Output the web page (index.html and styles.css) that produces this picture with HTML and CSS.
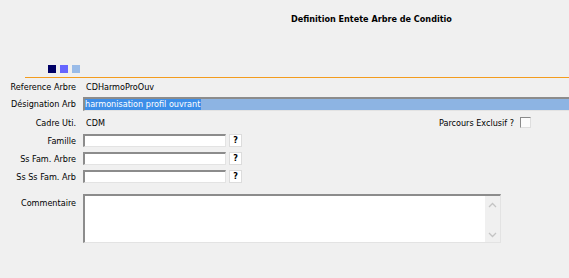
FILE: index.html
```html
<!DOCTYPE html>
<html>
<head>
    <meta charset="UTF-8">
    <title>Definition Entete Arbre de Conditio</title>
    <link rel="stylesheet" href="styles.css">
</head>
<body>
    <div class="header">
        <h1 class="title">Definition Entete Arbre de Conditio</h1>
    </div>

    <div class="swatches">
        <span class="sw sw-dark"></span>
        <span class="sw sw-mid"></span>
        <span class="sw sw-light"></span>
    </div>
    <div class="rule"></div>

    <div class="form">
        <div class="row row-ref">
            <span class="label">Reference Arbre</span>
            <span class="value">CDHarmoProOuv</span>
        </div>
        <div class="row row-desig">
            <span class="label">Désignation Arb</span>
            <div class="field field-wide field-selected"><span class="sel">harmonisation profil ouvrant</span></div>
        </div>
        <div class="row row-cadre">
            <span class="label">Cadre Uti.</span>
            <span class="value">CDM</span>
            <span class="check-label">Parcours Exclusif ?</span>
            <span class="check"></span>
        </div>
        <div class="row row-lookup">
            <span class="label">Famille</span>
            <div class="field field-short"></div>
            <span class="help">?</span>
        </div>
        <div class="row row-lookup">
            <span class="label">Ss Fam. Arbre</span>
            <div class="field field-short"></div>
            <span class="help">?</span>
        </div>
        <div class="row row-lookup">
            <span class="label">Ss Ss Fam. Arb</span>
            <div class="field field-short"></div>
            <span class="help">?</span>
        </div>
        <div class="row row-comment">
            <span class="label">Commentaire</span>
            <div class="field memo">
                <div class="scroll">
                    <svg width="9" height="6" viewBox="0 0 9 6"><path d="M1 5 L4.5 1.5 L8 5" fill="none" stroke="#c4c4c4" stroke-width="1.3"/></svg>
                    <svg width="9" height="6" viewBox="0 0 9 6"><path d="M1 1 L4.5 4.5 L8 1" fill="none" stroke="#c4c4c4" stroke-width="1.3"/></svg>
                </div>
            </div>
        </div>
    </div>
</body>
</html>
```

FILE: styles.css
```css
body { margin: 0; background: #f0f0f0; font-family: "DejaVu Sans Condensed", "Liberation Sans", Arial, sans-serif; font-size: 9px; color: #000; overflow: hidden; }
.header { height: 65px; }
.title { margin: 0; padding: 12px 0 0 291px; font-size: 9px; line-height: 14px; font-weight: bold; }
.swatches { display: flex; gap: 4px; padding-left: 48px; height: 8px; }
.sw { width: 8px; height: 8px; }
.sw-dark { background: #000066; }
.sw-mid { background: #6666ff; }
.sw-light { background: #99bbe8; }
.rule { margin: 4px 0 0 25px; height: 1px; background: #f39c1e; }
.row { display: flex; align-items: center; height: 13px; margin-top: 5px; }
.label { width: 76px; margin-right: 7px; text-align: right; white-space: nowrap; flex-shrink: 0; }
.value { margin-left: 3px; }
.row-ref { margin-top: 2px; }
.row-desig { margin-top: 4px; height: 14px; }
.row-cadre { margin-top: 5px; }
.row-comment { margin-top: 11px; height: 49px; align-items: flex-start; }
.row-comment .label { padding-top: 4px; }
.field { box-sizing: border-box; height: 100%; background: #fff; border-top: 2px solid #8c8c8c; border-left: 2px solid #8c8c8c; border-right: 1px solid #e3e3e3; border-bottom: 1px solid #e3e3e3; }
.field-wide { flex: 1; margin-right: -4px; display: flex; align-items: center; }
.field-selected { background: #8db4e3; }
.sel { background: #3d8ee8; color: #fff; line-height: 11px; padding-right: 1px; }
.field-short { width: 143px; }
.help { box-sizing: border-box; width: 13px; height: 13px; margin-left: 3px; background: #fff; border: 1px solid #dcdcdc; font-weight: bold; font-size: 9px; line-height: 11px; text-align: center; }
.check-label { margin-left: auto; margin-right: 6px; }
.check { box-sizing: border-box; width: 11px; height: 11px; margin-right: 38px; background: #fcfcfc; border-top: 1px solid #8a8a8a; border-left: 1px solid #8a8a8a; border-right: 1px solid #dedede; border-bottom: 1px solid #dedede; }
.memo { width: 418px; display: flex; justify-content: flex-end; }
.scroll { width: 15px; height: 100%; background: #f0f0f0; display: flex; flex-direction: column; justify-content: space-between; align-items: center; padding: 6px 0 4px; box-sizing: border-box; }
```
